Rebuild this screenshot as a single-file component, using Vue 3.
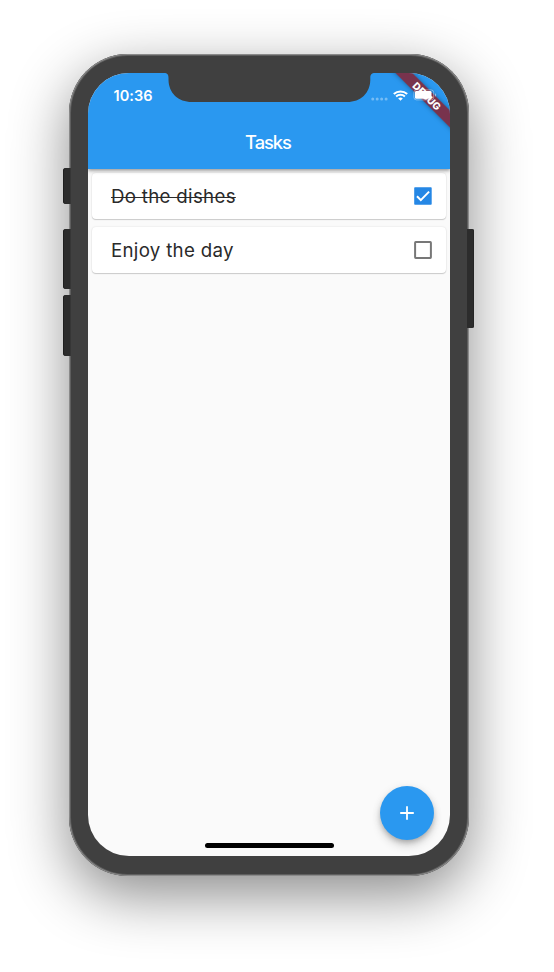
<script setup>
import { ref } from 'vue'

const tasks = ref([
  { id: 1, name: 'Do the dishes', done: true },
  { id: 2, name: 'Enjoy the day', done: false },
])

const toggle = (task) => {
  task.done = !task.done
}
</script>

<template>
  <main class="stage">
    <div class="phone">
      <i class="key mute"></i>
      <i class="key vol-up"></i>
      <i class="key vol-down"></i>
      <i class="key power"></i>
      <div class="screen">
        <header class="app-bar">
          <div class="status">
            <span class="clock">10:36</span>
            <div class="indicators">
              <svg class="signal" width="17" height="4" viewBox="0 0 17 4">
                <circle v-for="n in 4" :key="n" :cx="n * 4.45 - 2.7" cy="2" r="1.5" />
              </svg>
              <svg class="wifi" width="15" height="11" viewBox="0 0 15 11">
                <path d="M.8 4.1a9.8 9.8 0 0 1 13.4 0" />
                <path d="M3.1 6.5a6.5 6.5 0 0 1 8.8 0" />
                <path class="dot" d="M5.2 8.4a3.5 3.5 0 0 1 4.6 0L7.5 10.8z" />
              </svg>
              <svg class="battery" width="24" height="12" viewBox="0 0 24 12">
                <rect class="case" x=".9" y=".9" width="19.8" height="10" rx="2.6" />
                <rect class="charge" x="2" y="2" width="16.5" height="7.8" rx="1.3" />
                <path class="tip" d="M22 4.2v3.5q1.2-.5 1.2-1.75T22 4.2" />
              </svg>
            </div>
          </div>
          <h1>Tasks</h1>
        </header>
        <ul class="tasks">
          <li v-for="task in tasks" :key="task.id" class="card" @click="toggle(task)">
            <span class="name" :class="{ done: task.done }">{{ task.name }}</span>
            <svg class="check" width="18" height="18" viewBox="0 0 18 18">
              <g v-if="task.done">
                <rect class="fill" x=".2" y=".2" width="17.5" height="17.5" rx=".8" />
                <path class="tick" d="M3 9.2l3.8 3.9 8.3-8.5" />
              </g>
              <rect v-else class="box" x="1.1" y="1.1" width="15.8" height="15.8" rx=".6" />
            </svg>
          </li>
        </ul>
        <button class="fab" aria-label="Add">
          <svg width="14" height="14" viewBox="0 0 14 14">
            <path d="M7 .2v13.6M.2 7h13.6" />
          </svg>
        </button>
        <i class="home"></i>
        <svg class="notch" width="211" height="30" viewBox="0 0 211 30">
          <path d="M0 0C3.500 0 4.500 1.500 4.500 5V7C4.800 20 14 29 28 29H183C197 29 206 20 206.300 7V5C206.300 1.500 207.500 0 211 0Z" />
        </svg>
        <div class="ribbon"></div>
        <span class="ribbon-text">DEBUG</span>
      </div>
    </div>
  </main>
</template>

<style>
body {
  margin: 0;
  background: #fff;
}
</style>

<style scoped>
.stage {
  box-sizing: border-box;
  width: 554px;
  height: 972px;
  padding: 54px 0 0 69px;
  overflow: hidden;
  font-family: Inter, "Liberation Sans", sans-serif;
}
.phone {
  position: relative;
  box-sizing: border-box;
  width: 400px;
  height: 822px;
  padding: 19px;
  border-radius: 59px;
  background: #404040;
  box-shadow: inset 0 0 0 1px #8a8a8a, inset 0 0 0 2px #5e5e5e,
    0 19px 58px rgba(0, 0, 0, 0.46);
}
.key {
  position: absolute;
  left: -6px;
  width: 7px;
  box-sizing: border-box;
  border-radius: 3px 0 0 3px;
  background: #2c2c2c;
  box-shadow: inset 1px 0 #1f1f1f, 1px 0 #363636;
}
.mute { top: 114px; height: 36px; }
.vol-up { top: 175px; height: 60px; }
.vol-down { top: 241px; height: 61px; }
.power {
  left: 398px;
  top: 175px;
  height: 99px;
  border-radius: 0 2px 2px 0;
  box-shadow: inset -1px 0 #252525;
}
.screen {
  position: relative;
  display: flex;
  flex-direction: column;
  width: 362px;
  height: 783px;
  overflow: hidden;
  border-radius: 41px;
  background: #fafafa;
}
.app-bar {
  position: relative;
  flex: none;
  height: 96.300px;
  background: #2a98f0;
  color: #fff;
  box-shadow: 0 2px 4px rgba(0, 0, 0, 0.24), 0 1px 3px rgba(0, 0, 0, 0.22);
}
.status {
  display: flex;
  align-items: center;
  justify-content: space-between;
  height: 44px;
  padding: 0 13px 0 25.500px;
}
.clock {
  font-size: 14.500px;
  font-weight: 600;
  letter-spacing: 0.050px;
}
.indicators {
  display: flex;
  align-items: center;
  gap: 5px;
}
.signal {
  margin-top: 7px;
  fill: rgba(255, 255, 255, 0.36);
}
.wifi path {
  fill: none;
  stroke: #fff;
  stroke-width: 2;
}
.wifi .dot {
  fill: #fff;
  stroke: none;
}
.battery {
  position: relative;
  z-index: 2;
}
.case {
  fill: none;
  stroke: #fff;
  stroke-opacity: 0.4;
}
.charge {
  fill: #fff;
}
.tip {
  fill: rgba(255, 255, 255, 0.5);
}
h1 {
  margin: 13px 0 0;
  padding-right: 2px;
  font-size: 18.300px;
  line-height: 24px;
  font-weight: 500;
  letter-spacing: -1px;
  text-align: center;
}
.tasks {
  display: flex;
  flex-direction: column;
  gap: 7.700px;
  margin: 0;
  padding: 3.800px 4px;
  list-style: none;
}
.card {
  box-sizing: border-box;
  display: flex;
  align-items: center;
  justify-content: space-between;
  height: 46.300px;
  padding: 0 14px 0 19px;
  border-radius: 4px;
  background: #fff;
  box-shadow: 0 1px 1px rgba(0, 0, 0, 0.17), 0 0 2px rgba(0, 0, 0, 0.12);
}
.name {
  padding-top: 1px;
  font-size: 18.700px;
  font-weight: 400;
  line-height: 24px;
  letter-spacing: 0.300px;
  color: #2a2a2a;
  white-space: nowrap;
}
.done {
  text-decoration: line-through;
  text-decoration-thickness: 1px;
}
.check .fill {
  fill: #2587e5;
}
.check .tick {
  fill: none;
  stroke: #fff;
  stroke-width: 2;
}
.check .box {
  fill: none;
  stroke: #777;
  stroke-width: 2;
}
.fab {
  position: absolute;
  right: 15.600px;
  bottom: 15.600px;
  display: grid;
  place-items: center;
  width: 54px;
  height: 54px;
  padding: 0;
  border: 0;
  border-radius: 50%;
  background: #2a98f0;
  box-shadow: 0 3px 5px -1px rgba(0, 0, 0, 0.2), 0 6px 10px rgba(0, 0, 0, 0.14),
    0 1px 10px rgba(0, 0, 0, 0.08);
}
.fab path {
  fill: none;
  stroke: #fff;
  stroke-width: 1.800;
}
.home {
  position: absolute;
  left: 116.500px;
  bottom: 8px;
  width: 129px;
  height: 5px;
  border-radius: 3px;
  background: #000;
}
.notch {
  position: absolute;
  z-index: 2;
  left: 76px;
  top: 0;
  fill: #404040;
}
.ribbon {
  position: absolute;
  z-index: 1;
  left: 289px;
  top: 17px;
  width: 100px;
  height: 11.600px;
  transform: rotate(45deg);
  background: rgba(140, 26, 36, 0.8);
  box-shadow: 0 0 5px rgba(0, 0, 0, 0.38);
}
.ribbon-text {
  position: absolute;
  z-index: 3;
  left: 308.500px;
  top: 17px;
  width: 60px;
  color: #fff;
  font-size: 10px;
  font-weight: 800;
  line-height: 12px;
  text-align: center;
  transform: rotate(45deg);
}
</style>
